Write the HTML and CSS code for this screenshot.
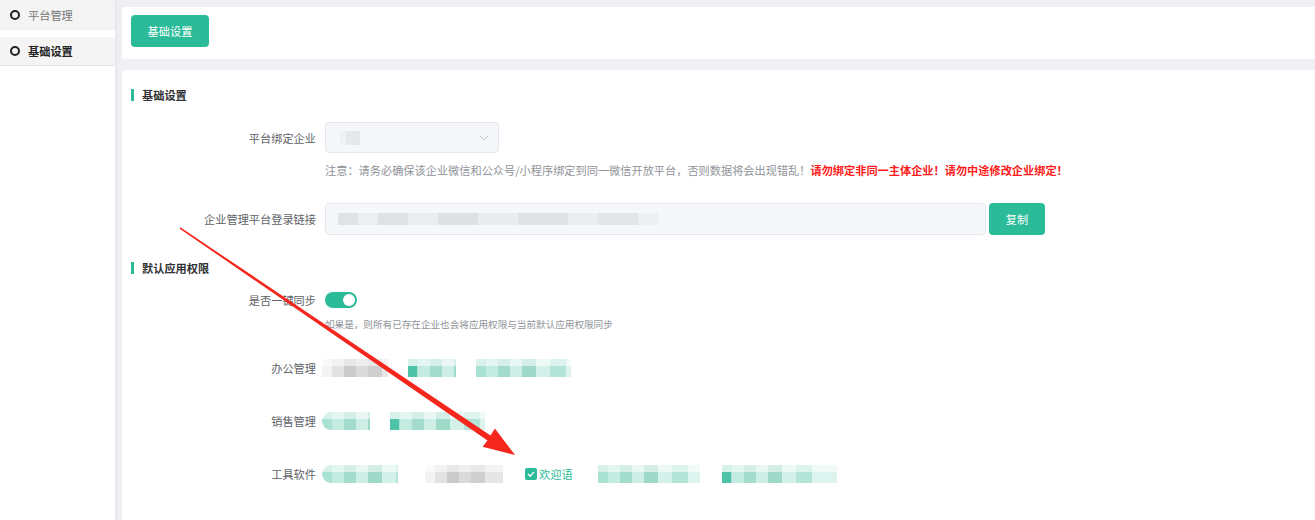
FILE: index.html
```html
<!DOCTYPE html>
<html>
<head lang="zh">
    <meta charset="UTF-8">
    <title>基础设置</title>
    <link rel="stylesheet" href="styles.css">
</head>
<body>
<div class="page">
    <div class="side">
        <div class="side-item first"><i class="ring"></i>平台管理</div>
        <div class="side-item on"><i class="ring"></i>基础设置</div>
    </div>
    <div class="main">
        <div class="card top">
            <button class="btn">基础设置</button>
        </div>
        <div class="card body">
            <div class="title"><i></i>基础设置</div>

            <div class="row r-select">
                <div class="label">平台绑定企业</div>
                <div class="select">
                    <span class="sel-blur"></span>
                    <svg class="arrow-down" width="10" height="6" viewBox="0 0 10 6"><path d="M1 1 L5 5 L9 1" fill="none" stroke="#c0c4cc" stroke-width="1"/></svg>
                </div>
            </div>
            <div class="note">注意：请务必确保该企业微信和公众号/小程序绑定到同一微信开放平台，否则数据将会出现错乱！<b>请勿绑定非同一主体企业！请勿中途修改企业绑定！</b></div>

            <div class="row r-link">
                <div class="label">企业管理平台登录链接</div>
                <div class="input"><span class="link-blur"></span></div>
                <button class="btn small">复制</button>
            </div>

            <div class="title t2"><i></i>默认应用权限</div>

            <div class="row r-switch">
                <div class="label">是否一键同步</div>
                <span class="switch"><span class="knob"></span></span>
            </div>
            <div class="hint">如果是，则所有已存在企业也会将应用权限与当前默认应用权限同步</div>

            <div class="row r-app">
                <div class="label">办公管理</div>
                <div class="apps">
                    <span class="mz gray w66"></span>
                    <span class="mz green w48 dot"></span>
                    <span class="mz green w95"></span>
                </div>
            </div>
            <div class="row r-app">
                <div class="label">销售管理</div>
                <div class="apps">
                    <span class="mz green w48 round"></span>
                    <span class="mz green w95 dot"></span>
                </div>
            </div>
            <div class="row r-app">
                <div class="label">工具软件</div>
                <div class="apps tools">
                    <span class="mz green w76 round"></span>
                    <span class="mz gray w78"></span>
                    <span class="check"><svg width="12" height="12" viewBox="0 0 12 12"><rect width="12" height="12" rx="2" fill="#2bbb99"/><path d="M3 6 L5.2 8.2 L9 3.8" fill="none" stroke="#fff" stroke-width="1.3"/></svg>欢迎语</span>
                    <span class="mz green w102"></span>
                    <span class="mz green w115 dot"></span>
                </div>
            </div>
        </div>
    </div>
</div>
<svg class="mark" width="1315" height="520" viewBox="0 0 1315 520">
    <polygon points="180.3,227.3 490.5,435.5 494.9,428.6 515,455 482.6,446.8 487.5,440.4 179.7,228.7" fill="#f5261c"/>
</svg>
</body>
</html>
```

FILE: styles.css
```css
*{
    padding: 0;
    margin: 0;
    box-sizing: border-box;
}
body{
    background: #eef0f3;
    font-family: "Noto Sans CJK SC", "Noto Sans", sans-serif;
    font-size: 11.2px;
    color: #606266;
    width: 1315px;
    height: 520px;
    overflow: hidden;
    position: relative;
}
.page{
    display: flex;
    height: 520px;
}
.side{
    width: 115px;
    background: #fff;
    box-shadow: 1px 0 4px rgba(0,0,0,.06);
}
.side-item{
    display: flex;
    align-items: center;
    height: 30px;
    padding-left: 10px;
    background: #f4f4f4;
    color: #777;
    font-size: 11.2px;
}
.side-item.first{
    margin-bottom: 7px;
}
.side-item.on{
    color: #222;
    font-weight: bold;
    height: 29px;
    border-bottom: 1px solid #e6e6e6;
}
.ring{
    width: 10px;
    height: 10px;
    border: 2px solid #222;
    border-radius: 50%;
    margin-right: 8px;
}
.main{
    flex: 1;
    padding: 7px 0 0 7px;
}
.card{
    background: #fff;
    border-radius: 3px 0 0 3px;
}
.card.top{
    height: 52px;
    padding: 8px 9px;
    margin-bottom: 11px;
}
.btn{
    width: 78px;
    height: 32px;
    border: none;
    border-radius: 4px;
    background: #2bbb99;
    color: #fff;
    font-family: inherit;
    font-size: 11.2px;
}
.btn.small{
    width: 56px;
    margin-left: 3px;
}
.card.body{
    height: 460px;
    padding-top: 17px;
}
.title{
    display: flex;
    align-items: center;
    height: 16px;
    padding-left: 9px;
    font-size: 11.2px;
    font-weight: bold;
    color: #303133;
}
.title i{
    width: 3px;
    height: 12px;
    background: #2bbb99;
    margin-right: 8px;
}
.title.t2{
    margin-top: 25px;
}
.row{
    display: flex;
    align-items: center;
}
.label{
    width: 203px;
    padding-right: 9px;
    text-align: right;
    color: #606266;
}
.r-select{
    margin-top: 19px;
}
.select{
    width: 174px;
    height: 31px;
    background: #f5f7fa;
    border: 1px solid #e4e7ed;
    border-radius: 4px;
    display: flex;
    align-items: center;
    justify-content: space-between;
    padding: 0 9px 0 14px;
}
.sel-blur{
    width: 20px;
    height: 14px;
    background: linear-gradient(to right, #f0f1f3 0 6px, #e7e8ea 6px 20px);
}
.note{
    margin: 8px 0 0 203px;
    line-height: 18px;
    color: #909399;
}
.note b{
    color: #ff1a1a;
}
.r-link{
    margin-top: 24px;
}
.input{
    width: 661px;
    height: 32px;
    background: #f5f7fa;
    border: 1px solid #e4e7ed;
    border-radius: 4px;
    display: flex;
    align-items: center;
    padding-left: 12px;
}
.link-blur{
    width: 320px;
    height: 12px;
    background: linear-gradient(to right, #e2e3e6 0 20px, #eceef0 20px 40px, #e0e1e4 40px 70px, #ebecee 70px 100px, #dfe0e3 100px 140px, #eaebee 140px 180px, #e1e2e5 180px 230px, #ecedef 230px 260px, #e4e5e8 260px 300px, #eeeff1 300px 320px);
}
.r-switch{
    margin-top: 14px;
    height: 20px;
}
.switch{
    width: 32px;
    height: 16px;
    border-radius: 8px;
    background: #2bbb99;
    display: flex;
    justify-content: flex-end;
    padding: 2px;
}
.knob{
    width: 12px;
    height: 12px;
    border-radius: 50%;
    background: #fff;
}
.hint{
    margin: 6px 0 0 203px;
    line-height: 16px;
    font-size: 9.6px;
    color: #909399;
}
.r-app{
    height: 20px;
    margin-top: 33px;
}
.hint + .r-app{
    margin-top: 26px;
}
.apps{
    display: flex;
    align-items: center;
    gap: 20px;
    margin-left: -3px;
}
.apps.tools{
    gap: 22px;
}
.tools .gray{
    margin-left: 5px;
}
.tools .check{
    margin: 0 3px 0 0;
}
.mz{
    height: 18px;
    display: block;
    position: relative;
}
.mz.green{
    background: linear-gradient(to right, #a9e1d2 0 10px, #c4ebe0 10px 22px, #a3dccd 22px 34px, #cdeee5 34px 46px, #9fdac9 46px 60px, #d4f1e9 60px 74px, #b3e4d7 74px 90px, #ddf4ee 90px 120px);
}
.mz.gray{
    background: linear-gradient(to right, #f3f3f3 0 10px, #e2e2e2 10px 22px, #cbcbcb 22px 34px, #dadada 34px 46px, #cfcfcf 46px 60px, #e5e5e5 60px 80px);
}
.mz::before{
    content: "";
    position: absolute;
    left: 0;
    right: 0;
    top: 0;
    height: 7px;
    background: rgba(255,255,255,.55);
}
.mz.dot::after{
    content: "";
    position: absolute;
    left: 0;
    top: 7px;
    width: 9px;
    height: 11px;
    background: #4fc3a8;
}
.mz.round{
    border-radius: 9px 0 0 9px;
}
.w48{ width: 48px; }
.w66{ width: 66px; }
.w76{ width: 76px; }
.w78{ width: 78px; }
.w95{ width: 95px; }
.w102{ width: 102px; }
.w115{ width: 115px; }
.check{
    display: flex;
    align-items: center;
    gap: 2px;
    color: #2bbb99;
    margin: 0 4px;
}
.mark{
    position: absolute;
    left: 0;
    top: 0;
    pointer-events: none;
}
```
